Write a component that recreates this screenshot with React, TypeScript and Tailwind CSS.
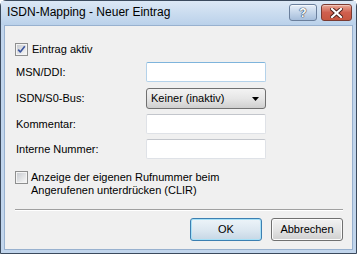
import React from 'react';

const font = { fontFamily: '"Liberation Sans", Arial, sans-serif' };

const Checkbox: React.FC<{ checked?: boolean }> = ({ checked }) => (
  <svg width="13" height="13" viewBox="0 0 13 13" className="shrink-0">
    <rect x="0.5" y="0.5" width="12" height="12" fill="#f4f4f4" stroke="#8e8f8f" />
    <rect x="2" y="2" width="9" height="9" fill="url(#cbg)" stroke="#b0b4ba" strokeWidth="0" />
    <defs>
      <linearGradient id="cbg" x1="0" y1="0" x2="1" y2="1">
        <stop offset="0" stopColor="#c9ccd1" />
        <stop offset="1" stopColor="#f6f6f6" />
      </linearGradient>
    </defs>
    {checked && (
      <path d="M3.2 6.6 L5.3 9 L9.8 3.2" fill="none" stroke="#3b55a0" strokeWidth="1.6" strokeLinejoin="round" />
    )}
  </svg>
);

const TextBox: React.FC<{ active?: boolean }> = ({ active }) =>
  active ? (
    <div className="w-[120px] h-[20px] bg-white rounded-[2px] border border-[#b4d2ea] border-t-[#7eb4dc]" />
  ) : (
    <div className="w-[120px] h-[20px] bg-white rounded-[2px] border border-[#dfe2e7] border-t-[#c3c6cc]" />
  );

const Row: React.FC<{ label: string; children: React.ReactNode; className?: string }> = ({ label, children, className }) => (
  <div className={`flex items-center ${className ?? ''}`}>
    <span className="w-[131px] pl-[1px] text-[11px] text-black">{label}</span>
    {children}
  </div>
);

export default function App() {
  return (
    <div className="w-[357px] h-[254px] overflow-hidden" style={font}>
      <div className="w-full h-full flex flex-col rounded-t-[6px] border border-[#3b4a5d] bg-[#c1d5ec] px-[3px] pb-[3px]">
        {/* Title bar */}
        <div className="h-[24px] -mx-[3px] px-[6px] flex items-start bg-gradient-to-b from-[#dce8f5] to-[#bad1ea]">
          <span className="mt-[4px] text-[12px] text-black leading-[15px]">ISDN-Mapping - Neuer Eintrag</span>
          <div className="ml-auto flex items-start gap-[4px] mt-[3px] -mr-[2px]">
            <div className="relative w-[28px] h-[17px] rounded-[3px] border border-[#6a7f9c] bg-gradient-to-b from-[#e6eef8] via-[#c5d6ea] to-[#a6bedb] flex items-center justify-center shadow-[inset_0_1px_0_#f4f8fc]">
              <span
                className="text-[12px] font-bold text-white leading-none"
                style={{ textShadow: '0 0 1px #2c3e58, 0 0 1px #2c3e58, 0 0 1px #2c3e58' }}
              >
                ?
              </span>
            </div>
            <div className="w-[31px] h-[17px] rounded-[3px] border border-[#7a3a31] bg-gradient-to-b from-[#e8a896] via-[#cf5f4e] to-[#c7563f] flex items-center justify-center shadow-[inset_0_1px_0_#f1c5b9]">
              <svg width="13" height="10" viewBox="0 0 13 10">
                <path d="M2 1 L11 9 M11 1 L2 9" stroke="#4a1f1a" strokeWidth="4" strokeLinecap="square" />
                <path d="M2 1 L11 9 M11 1 L2 9" stroke="#ffffff" strokeWidth="2.2" strokeLinecap="square" />
              </svg>
            </div>
          </div>
        </div>

        {/* Client area */}
        <div className="flex-1 bg-[#f0f0f0] border border-[#98b1cf] pl-[10px] pr-[9px] flex flex-col text-[11px] text-black">
          <label className="flex items-center gap-[4px] mt-[17px] h-[13px]">
            <Checkbox checked />
            <span>Eintrag aktiv</span>
          </label>

          <Row label="MSN/DDI:" className="mt-[6px]">
            <TextBox active />
          </Row>
          <Row label="ISDN/S0-Bus:" className="mt-[6px]">
            <div className="w-[120px] h-[21px] rounded-[3px] border border-[#707070] bg-gradient-to-b from-[#f3f3f3] via-[#e6e6e6] to-[#cfcfcf] flex items-center pl-[4px] pr-[6px]">
              <span>Keiner (inaktiv)</span>
              <svg width="7" height="4" viewBox="0 0 7 4" className="ml-auto">
                <path d="M0 0 H7 L3.5 4 Z" fill="#000" />
              </svg>
            </div>
          </Row>
          <Row label="Kommentar:" className="mt-[5px]">
            <TextBox />
          </Row>
          <Row label="Interne Nummer:" className="mt-[5px]">
            <TextBox />
          </Row>

          <label className="flex items-start gap-[3px] mt-[12px]">
            <Checkbox />
            <span className="leading-[13px]">
              Anzeige der eigenen Rufnummer beim
              <br />
              Angerufenen unterdrücken (CLIR)
            </span>
          </label>

          <div className="mt-[12px] h-px bg-[#a0a0a0] shadow-[0_1px_0_#ffffff]" />

          <div className="mt-[8px] flex justify-end gap-[9px]">
            <button className="w-[72px] h-[23px] rounded-[3px] border border-[#3c7fb1] bg-gradient-to-b from-[#edf4f9] via-[#dde8f1] to-[#c6d7e5] shadow-[inset_0_0_0_1px_#a6e0f7] text-[11px] text-black">
              OK
            </button>
            <button className="w-[72px] h-[23px] rounded-[3px] border border-[#707070] bg-gradient-to-b from-[#f2f2f2] via-[#e4e4e4] to-[#cfcfcf] shadow-[inset_0_0_0_1px_#fbfbfb] text-[11px] text-black">
              Abbrechen
            </button>
          </div>
        </div>
      </div>
    </div>
  );
}
